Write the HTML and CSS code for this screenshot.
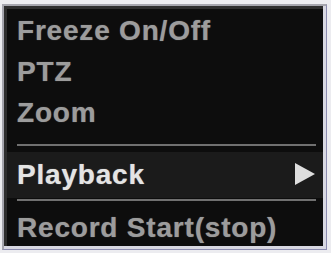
FILE: index.html
```html
<!DOCTYPE html>
<html>
<head>
<meta charset="utf-8">
<link rel="stylesheet" href="styles.css">
</head>
<body>
<div class="outer">
  <div class="panel">
    <div class="item">Freeze On/Off</div>
    <div class="item">PTZ</div>
    <div class="item">Zoom</div>
    <div class="sep sep-a"></div>
    <div class="item active">
      <span>Playback</span>
      <svg class="arrow" width="20" height="22" viewBox="0 0 20 22"><polygon points="0,0 20,11 0,22" fill="#dedede"/></svg>
    </div>
    <div class="sep sep-b"></div>
    <div class="item last">Record Start(stop)</div>
  </div>
</div>
</body>
</html>
```

FILE: styles.css
```css
html, body {
  margin: 0;
  padding: 0;
  width: 331px;
  height: 253px;
  overflow: hidden;
  background: #ececf0;
}
.outer {
  margin: 4px 4px 1px 2px;
  height: 246px;
  box-sizing: border-box;
  border-top: 2px solid #a6a6ae;
  border-left: 2px solid #a6a6ae;
  border-right: 1px solid #8c8cb0;
  border-bottom: 1px solid #8c8cb0;
  padding: 0 3px 3px 0;
  background: #d8d8e2;
}
.panel {
  height: 100%;
  box-sizing: border-box;
  border-top: 3px solid #2e2e2e;
  border-left: 3px solid #2e2e2e;
  background: #0d0d0d;
  padding-top: 1px;
  overflow: hidden;
  display: flex;
  flex-direction: column;
  font-family: "Liberation Sans", Arial, sans-serif;
  font-weight: bold;
  font-size: 28px;
  letter-spacing: 0.8px;
  color: #9c9c9c;
}
.item {
  height: 41px;
  line-height: 41px;
  padding-left: 10px;
  white-space: nowrap;
  flex: none;
  text-shadow: 0 0 1px rgba(150,150,150,0.7);
}
.item.active {
  height: 46px;
  line-height: 46px;
  background: #1b1b1b;
  color: #e4e4e4;
  display: flex;
  align-items: center;
  justify-content: space-between;
  padding-right: 8px;
  text-shadow: 0 0 1px rgba(230,230,230,0.6);
}
.item.last {
  height: 41px;
  line-height: 41px;
}
.arrow {
  display: block;
  margin-top: -2px;
}
.sep {
  height: 2px;
  background: #707070;
  margin-left: 10px;
  margin-right: 7px;
  flex: none;
}
.sep-a {
  margin-top: 11px;
  margin-bottom: 6px;
}
.sep-b {
  margin-top: 1px;
  margin-bottom: 6px;
}
```
